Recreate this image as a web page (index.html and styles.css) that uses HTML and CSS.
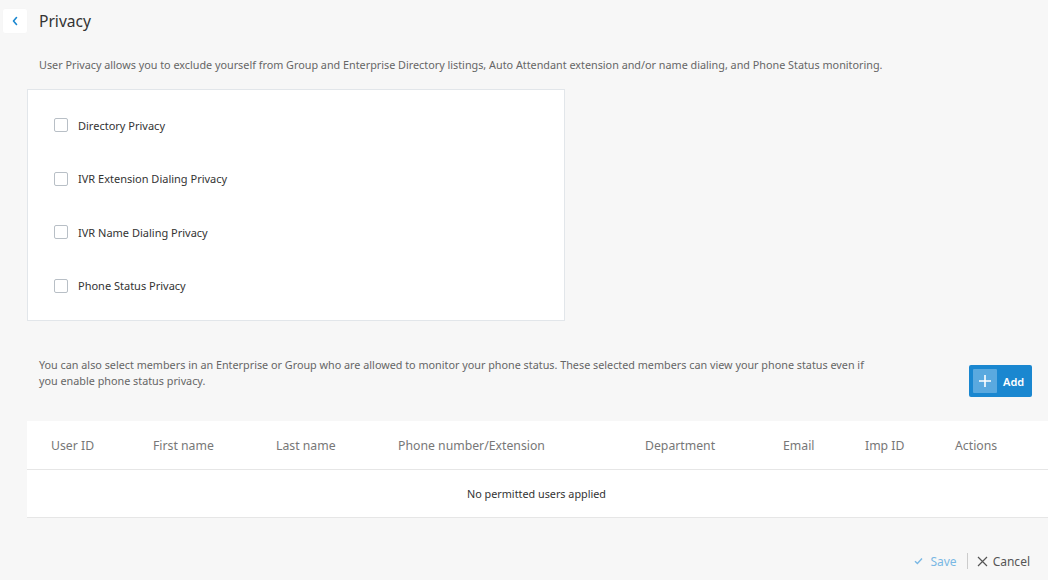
FILE: index.html
```html
<!DOCTYPE html>
<html>
<head>
<meta charset="utf-8">
<link rel="stylesheet" href="styles.css">
</head>
<body>
<div class="page">
  <div class="header">
    <button class="back" aria-label="Back">
      <svg width="8" height="10" viewBox="0 0 8 10"><path d="M5.5 1.5 L2.5 5 L5.5 8.5" fill="none" stroke="#1a87d0" stroke-width="1.6" stroke-linecap="round" stroke-linejoin="round"/></svg>
    </button>
    <h1 class="title">Privacy</h1>
  </div>
  <p class="intro">User Privacy allows you to exclude yourself from Group and Enterprise Directory listings, Auto Attendant extension and/or name dialing, and Phone Status monitoring.</p>
  <div class="card">
    <label class="check-row"><span class="box"></span><span>Directory Privacy</span></label>
    <label class="check-row"><span class="box"></span><span>IVR Extension Dialing Privacy</span></label>
    <label class="check-row"><span class="box"></span><span>IVR Name Dialing Privacy</span></label>
    <label class="check-row"><span class="box"></span><span>Phone Status Privacy</span></label>
  </div>
  <div class="members">
    <p class="members-text">You can also select members in an Enterprise or Group who are allowed to monitor your phone status. These selected members can view your phone status even if you enable phone status privacy.</p>
    <button class="add-btn"><span class="plus"><svg width="14" height="14" viewBox="0 0 14 14"><path d="M7 1 V13 M1 7 H13" stroke="#fff" stroke-width="1.6"/></svg></span><span>Add</span></button>
  </div>
  <div class="table">
    <div class="thead">
      <span class="c1">User ID</span>
      <span class="c2">First name</span>
      <span class="c3">Last name</span>
      <span class="c4">Phone number/Extension</span>
      <span class="c5">Department</span>
      <span class="c6">Email</span>
      <span class="c7">Imp ID</span>
      <span class="c8">Actions</span>
    </div>
    <div class="empty">No permitted users applied</div>
  </div>
  <div class="footer">
    <button class="save"><svg width="9" height="8" viewBox="0 0 9 8"><path d="M1 4.2 L3.4 6.5 L8 1.5" fill="none" stroke="#7ab8e4" stroke-width="1.4"/></svg><span>Save</span></button>
    <span class="sep"></span>
    <button class="cancel"><svg width="11" height="11" viewBox="0 0 11 11"><path d="M1 1 L10 10 M10 1 L1 10" stroke="#555" stroke-width="1.2"/></svg><span>Cancel</span></button>
  </div>
</div>
</body>
</html>
```
FILE: styles.css
```css
html, body {
  margin: 0;
  padding: 0;
  background: #f7f7f7;
}
body {
  font-family: "Noto Sans", "Open Sans", sans-serif;
  color: #333;
  width: 1048px;
  height: 580px;
  overflow: hidden;
}
.page {
  padding: 9px 0 0 27px;
}
.header {
  display: flex;
  align-items: center;
  margin-left: -24px;
  height: 24px;
}
.back {
  width: 24px;
  height: 24px;
  border: none;
  background: #fff;
  border-radius: 2px;
  padding: 0;
  display: flex;
  align-items: center;
  justify-content: center;
  box-shadow: 0 0 1px rgba(0,0,0,0.04);
}
.title {
  margin: 0 0 0 12px;
  font-size: 15.6px;
  font-weight: 400;
  color: #333;
  line-height: 24px;
}
.intro {
  margin: 24px 0 0 12px;
  font-size: 10.8px;
  color: #666;
  line-height: 16px;
  white-space: nowrap;
}
.card {
  margin-top: 16px;
  width: 538px;
  height: 232px;
  background: #fff;
  border: 1px solid #e2e6ea;
  box-sizing: border-box;
  padding-top: 27px;
  display: flex;
  flex-direction: column;
  gap: 37.6px;
}
.check-row {
  display: flex;
  align-items: center;
  height: 16px;
  padding-left: 26px;
  font-size: 11px;
  color: #333;
}
.box {
  width: 12px;
  height: 12px;
  border: 1px solid #b8bfc6;
  border-radius: 2px;
  margin-right: 10px;
  background: #fff;
}
.members {
  display: flex;
  align-items: flex-start;
  justify-content: space-between;
  margin-top: 36px;
  padding-right: 16px;
}
.members-text {
  margin: 0 0 0 12px;
  width: 840px;
  font-size: 10.8px;
  line-height: 16px;
  color: #666;
}
.add-btn {
  margin-top: 8px;
  width: 63px;
  height: 32px;
  background: #1a87d0;
  border: none;
  border-radius: 2px;
  display: flex;
  align-items: center;
  padding: 0 0 0 4px;
  color: #fff;
  font-family: inherit;
  font-size: 11px;
  font-weight: 600;
}
.plus {
  width: 24px;
  height: 24px;
  background: #5aa9df;
  border-radius: 1px;
  display: flex;
  align-items: center;
  justify-content: center;
  margin-right: 6px;
}
.table {
  margin-top: 24px;
  background: #fff;
  border-bottom: 1px solid #e6e6e6;
}
.thead {
  display: flex;
  align-items: center;
  height: 48px;
  border-bottom: 1px solid #e6e6e6;
  font-size: 12.25px;
  color: #777;
}
.thead span { flex: none; }
.c1 { margin-left: 24px; width: 102px; }
.c2 { width: 123px; }
.c3 { width: 122px; }
.c4 { width: 247px; }
.c5 { width: 138px; }
.c6 { width: 82px; }
.c7 { width: 90px; }
.empty {
  height: 47px;
  display: flex;
  align-items: center;
  justify-content: center;
  font-size: 10.8px;
  color: #333;
  padding-right: 2px;
}
.footer {
  display: flex;
  justify-content: flex-end;
  align-items: center;
  margin-top: 33px;
  padding-right: 18px;
  height: 20px;
}
.footer button {
  border: none;
  background: none;
  padding: 0;
  display: flex;
  align-items: center;
  font-family: inherit;
  font-size: 12px;
}
.save { color: #7ab8e4; }
.save svg { margin-right: 7px; }
.sep {
  width: 1px;
  height: 16px;
  background: #ccc;
  margin: 0 9px 0 10px;
}
.cancel { color: #555; }
.cancel svg { margin-right: 5px; }
```
